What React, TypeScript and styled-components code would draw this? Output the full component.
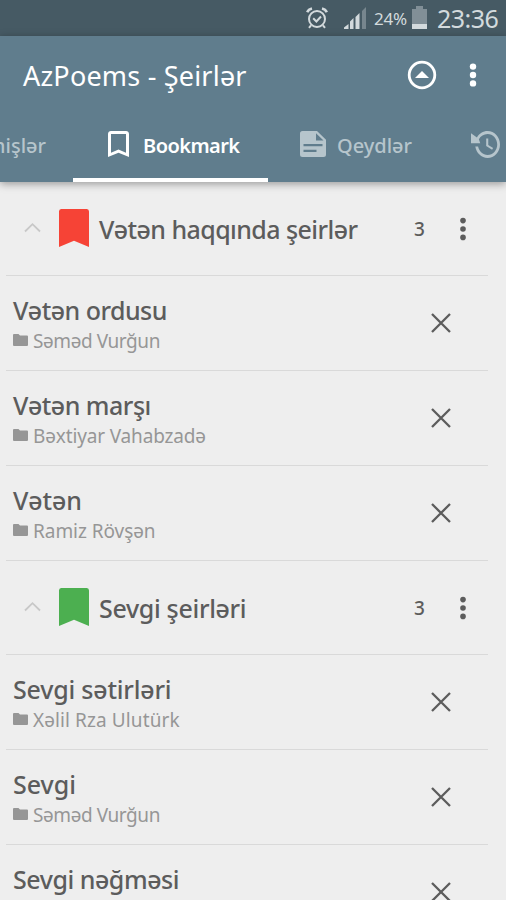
import React from "react";
import styled, { createGlobalStyle } from "styled-components";

const GlobalStyle = createGlobalStyle`
  * { box-sizing: border-box; }
  html, body { margin: 0; padding: 0; background: #eeeeee; }
  body { font-family: "Noto Sans", "Open Sans", sans-serif; overflow: hidden; }
`;

const Screen = styled.div`
  width: 506px;
  height: 900px;
  display: flex;
  flex-direction: column;
  overflow: hidden;
  background: #eeeeee;
`;

const StatusBar = styled.div`
  flex: none;
  height: 36px;
  padding: 0 7px 2px 0;
  display: flex;
  align-items: center;
  justify-content: flex-end;
  background: #465a64;
  color: #d3dadd;
`;

const Percent = styled.span`
  width: 34px;
  margin: 3px 4px 0 8px;
  font-size: 17px;
  line-height: 20px;
  letter-spacing: -0.2px;
  white-space: nowrap;
`;

const Clock = styled.span`
  width: 62px;
  margin-left: 10px;
  font-size: 25px;
  line-height: 34px;
  letter-spacing: -0.5px;
  white-space: nowrap;
  margin-top: 2px;
`;

const Glyph = styled.svg<{ $mr?: number; $mt?: number }>`
  display: block;
  flex: none;
  fill: currentColor;
  overflow: visible;
  margin-right: ${(p) => p.$mr ?? 0}px;
  margin-top: ${(p) => p.$mt ?? 0}px;
`;

const Header = styled.header`
  flex: none;
  height: 146px;
  display: flex;
  flex-direction: column;
  background: #607d8d;
  color: #ffffff;
  box-shadow: 0 2px 8px rgba(0, 0, 0, 0.36);
`;

const Toolbar = styled.div`
  height: 76px;
  padding: 2px 29px 0 23px;
  display: flex;
  align-items: center;
`;

const AppTitle = styled.h1`
  flex: 1;
  margin: 2px 0 0;
  font-size: 27px;
  font-weight: 450;
  line-height: 36px;
  letter-spacing: 0.2px;
  white-space: nowrap;
`;

const Tabs = styled.nav`
  height: 70px;
  display: flex;
  overflow: hidden;
`;

const Tab = styled.div<{ $width: number; $start: number; $active?: boolean }>`
  flex: none;
  width: ${(p) => p.$width}px;
  height: 70px;
  padding: 0 0 2px ${(p) => p.$start}px;
  display: flex;
  align-items: center;
  color: ${(p) => (p.$active ? "#ffffff" : "#b6c5cc")};
  border-bottom: 4px solid ${(p) => (p.$active ? "#ffffff" : "transparent")};
`;

const ClippedTab = styled(Tab)`
  justify-content: flex-end;
  padding-right: 27px;
`;

const TabLabel = styled.span<{ $bold?: boolean }>`
  font-size: 20px;
  font-weight: ${(p) => (p.$bold ? 650 : 500)};
  line-height: 28px;
  letter-spacing: ${(p) => (p.$bold ? -0.55 : 0)}px;
  white-space: nowrap;
  margin-top: 3px;
`;

const List = styled.main`
  flex: 1;
  padding: 0 18px 0 6px;
  overflow: hidden;
`;

const GroupRow = styled.div`
  height: 94px;
  padding: 0 21px 0 18px;
  display: flex;
  align-items: center;
  border-bottom: 1px solid #d9d9d9;
  color: #5c5c5c;
`;

const Arrow = styled(Glyph)`
  color: #c8c8c8;
`;

const Flag = styled(Glyph)<{ $color: string }>`
  color: ${(p) => p.$color};
`;

const GroupTitle = styled.h2<{ $spacing: number }>`
  flex: 1;
  margin: 0;
  font-size: 25px;
  font-weight: 470;
  line-height: 34px;
  letter-spacing: ${(p) => p.$spacing}px;
  white-space: nowrap;
`;

const Count = styled.span`
  width: 45px;
  font-size: 19px;
  line-height: 28px;
  font-weight: 500;
`;

const PoemRow = styled.div`
  height: 95px;
  padding: 0 37.5px 0 7px;
  display: flex;
  align-items: center;
  justify-content: space-between;
  border-bottom: 1px solid #d9d9d9;
  color: #5c5c5c;
`;

const PoemText = styled.div`
  display: flex;
  flex-direction: column;
  padding-top: 2px;
`;

const PoemTitle = styled.h3<{ $spacing: number }>`
  margin: 0;
  font-size: 25px;
  font-weight: 470;
  line-height: 34px;
  letter-spacing: ${(p) => p.$spacing}px;
  white-space: nowrap;
`;

const Author = styled.div<{ $spacing: number }>`
  display: flex;
  align-items: center;
  color: #969696;
  font-size: 19px;
  line-height: 28px;
  letter-spacing: ${(p) => p.$spacing}px;
  white-space: nowrap;
`;

const Dots = ({ r }: { r: number }) => (
  <Glyph width="8" height="24" viewBox="0 0 8 24">
    <circle cx="4" cy="3.6" r={r} />
    <circle cx="4" cy="12" r={r} />
    <circle cx="4" cy="20.4" r={r} />
  </Glyph>
);

type Poem = { title: string; author: string; ts: number; as: number };
type Group = { title: string; color: string; count: number; ts: number; poems: Poem[] };

const groups: Group[] = [
  {
    title: "Vətən haqqında şeirlər", color: "#f64336", count: 3, ts: -0.57,
    poems: [
      { title: "Vətən ordusu", author: "Səməd Vurğun", ts: -0.53, as: -0.42 },
      { title: "Vətən marşı", author: "Bəxtiyar Vahabzadə", ts: -0.5, as: -0.15 },
      { title: "Vətən", author: "Ramiz Rövşən", ts: -0.1, as: -0.05 },
    ],
  },
  {
    title: "Sevgi şeirləri", color: "#4caf50", count: 3, ts: -0.32,
    poems: [
      { title: "Sevgi sətirləri", author: "Xəlil Rza Ulutürk", ts: -0.2, as: 0.1 },
      { title: "Sevgi", author: "Səməd Vurğun", ts: 0, as: -0.42 },
      { title: "Sevgi nəğməsi", author: "Səməd Vurğun", ts: -0.46, as: -0.42 },
    ],
  },
];

export default function App() {
  return (
    <Screen>
      <GlobalStyle />
      <StatusBar>
        <Glyph width="22" height="22" viewBox="0 0 22 22" $mr={16} $mt={2}>
          <g fill="none" stroke="currentColor" strokeWidth="2">
            <circle cx="11" cy="12" r="8" />
            <path d="M7.2 11.3l3.2 3.2 4.6-5M5 18.3l-2 2.5M17 18.3l2 2.5" />
            <path d="M1.2 5.3Q2.5 2.3 6 1.5M20.8 5.3Q19.5 2.3 16 1.5" strokeWidth="2.6" />
          </g>
        </Glyph>
        <Glyph width="22" height="22" viewBox="0 0 22 22" $mt={2}>
          <path d="M0 22v-1.5L4.5 17v5zM6 22v-7.5l3.5-3.5v11zM11.5 22V10l4-4v16z" />
          <path d="M18 22V4l4-4v22z" opacity=".35" />
        </Glyph>
        <Percent>24%</Percent>
        <Glyph width="15" height="23" viewBox="0 0 15 23">
          <path d="M4 0h7v3h4v15H0V3h4z" opacity=".42" />
          <path d="M0 18h15v5H0z" />
        </Glyph>
        <Clock>23:36</Clock>
      </StatusBar>

      <Header>
        <Toolbar>
          <AppTitle>AzPoems - Şeirlər</AppTitle>
          <Glyph width="30" height="30" viewBox="0 0 30 30" $mr={32}>
            <circle cx="15" cy="15" r="12.8" fill="none" stroke="currentColor" strokeWidth="2.8" />
            <path d="M8 18l7-7 7 7z" />
          </Glyph>
          <Dots r={3.2} />
        </Toolbar>
        <Tabs>
          <ClippedTab $width={73} $start={0}>
            <TabLabel>Seçilmişlər</TabLabel>
          </ClippedTab>
          <Tab $width={195} $start={35} $active>
            <Glyph width="21" height="26" viewBox="5 3 14 18" preserveAspectRatio="none" $mr={14}>
              <path d="M17 3H7c-1.1 0-1.99.9-1.99 2L5 21l7-3 7 3V5c0-1.1-.9-2-2-2zm0 15l-5-2.18L7 18V5h10v13z" />
            </Glyph>
            <TabLabel $bold>Bookmark</TabLabel>
          </Tab>
          <Tab $width={176} $start={32}>
            <Glyph width="26" height="26" viewBox="0 0 26 26" $mr={11}>
              <path
                fillRule="evenodd"
                d="M2.5 0H17l9 8.8v14.7a2.5 2.5 0 0 1-2.5 2.5h-21A2.5 2.5 0 0 1 0 23.5v-21A2.5 2.5 0 0 1 2.5 0zM16 2.2v7.3h7.5zM3.5 13v2.2h19V13zM3.5 18.8v2.2h13v-2.2z"
              />
            </Glyph>
            <TabLabel>Qeydlər</TabLabel>
          </Tab>
          <Tab $width={80} $start={27}>
            <Glyph width="29" height="27" viewBox="1 3 21 18" preserveAspectRatio="none">
              <path d="M13 3C9.7 3 6.9 4.7 5.3 7.3L1 4.5V11.2H7.7L6.7 8.5C8 6.4 10.3 5 13 5c3.87 0 7 3.13 7 7s-3.13 7-7 7c-3.4 0-6.2-2.4-6.85-5.6H4.1C4.8 17.7 8.5 21 13 21c4.97 0 9-4.03 9-9s-4.03-9-9-9zm-1 5v5l4.28 2.54.72-1.21-3.5-2.08V8H12z" />
            </Glyph>
          </Tab>
        </Tabs>
      </Header>

      <List>
        {groups.map((group) => (
          <React.Fragment key={group.title}>
            <GroupRow>
              <Arrow width="17" height="9" viewBox="0 0 17 9" $mr={17.7} $mt={-2}>
                <path d="M1 8.5l7.5-7.3L16 8.5" fill="none" stroke="currentColor" strokeWidth="1.8" />
              </Arrow>
              <Flag width="30" height="38" viewBox="5 3 14 18" preserveAspectRatio="none" $mr={10.3} $mt={-2} $color={group.color}>
                <path d="M18 3H6Q5 3 5 4.2V21l7-3 7 3V4.2Q19 3 18 3z" />
              </Flag>
              <GroupTitle $spacing={group.ts}>{group.title}</GroupTitle>
              <Count>{group.count}</Count>
              <Dots r={2.8} />
            </GroupRow>
            {group.poems.map((poem) => (
              <PoemRow key={poem.title}>
                <PoemText>
                  <PoemTitle $spacing={poem.ts}>{poem.title}</PoemTitle>
                  <Author $spacing={poem.as}>
                    <Glyph width="15" height="12" viewBox="0 0 15 12" $mr={5} $mt={-3}>
                      <path d="M1 0h4.5l1.5 1.5h7a1 1 0 0 1 1 1V11a1 1 0 0 1-1 1H1a1 1 0 0 1-1-1V1a1 1 0 0 1 1-1z" />
                    </Glyph>
                    {poem.author}
                  </Author>
                </PoemText>
                <Glyph width="20" height="20" viewBox="0 0 20 20" $mt={-1}>
                  <path d="M1 1l18 18M19 1L1 19" fill="none" stroke="currentColor" strokeWidth="2.3" />
                </Glyph>
              </PoemRow>
            ))}
          </React.Fragment>
        ))}
      </List>
    </Screen>
  );
}
